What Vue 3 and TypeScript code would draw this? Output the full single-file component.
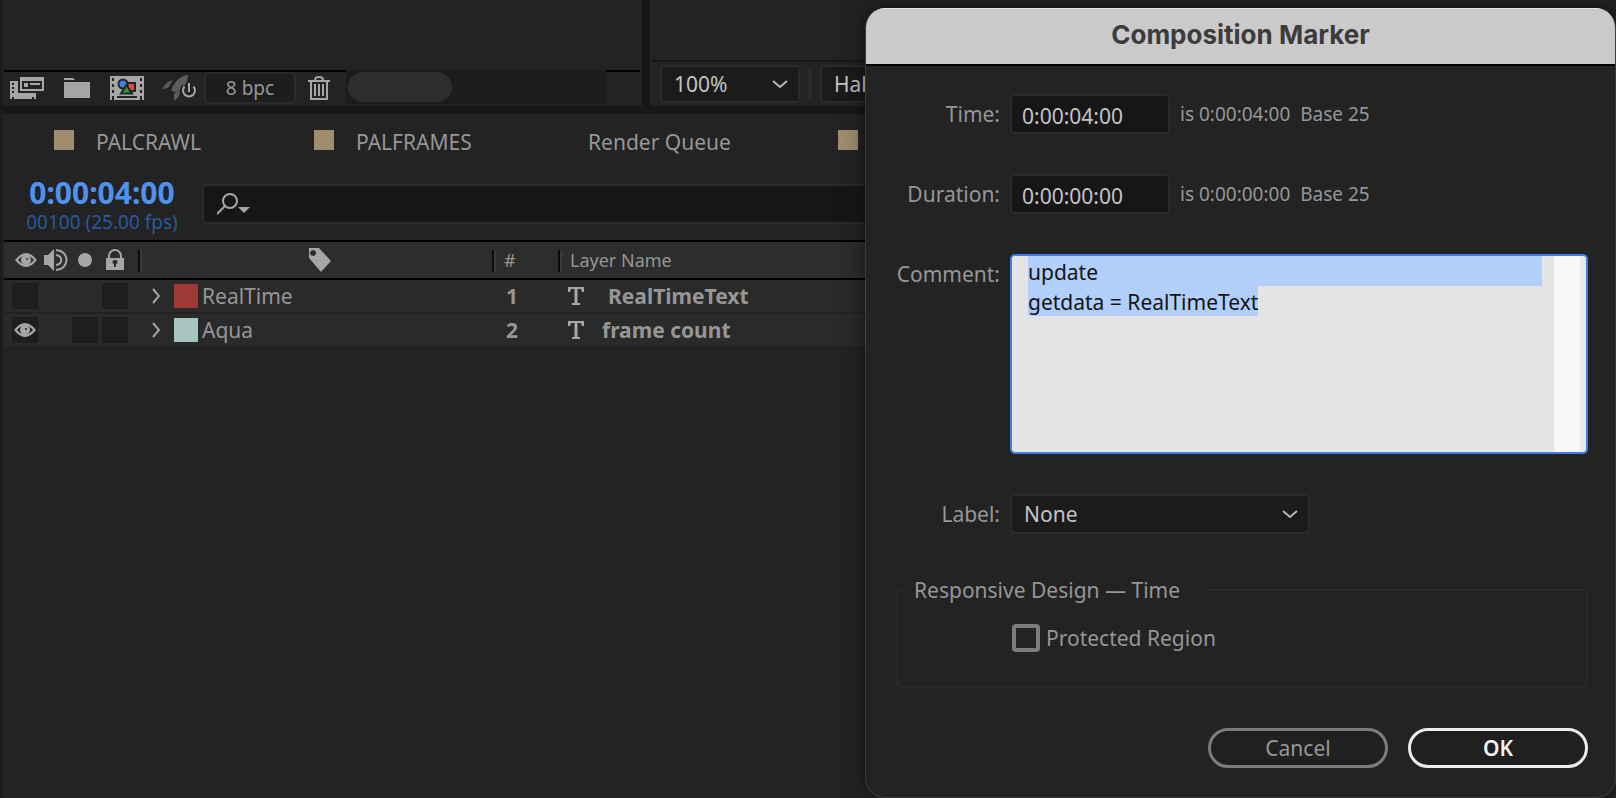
<script setup lang="ts">
import { ref } from 'vue'

interface Layer {
  id: number
  label: string
  color: string
  name: string
  visible: boolean
  solo: boolean
  renamed: boolean
}

const tabs = [
  { name: 'PALCRAWL', swatch: true },
  { name: 'PALFRAMES', swatch: true },
  { name: 'Render Queue', swatch: false },
  { name: '', swatch: true },
]

const layers = ref<Layer[]>([
  { id: 1, label: 'RealTime', color: '#9f3a36', name: 'RealTimeText', visible: false, solo: false, renamed: false },
  { id: 2, label: 'Aqua', color: '#a8c4c1', name: 'frame count', visible: true, solo: true, renamed: true },
])

const search = ref('')
const time = ref('0:00:04:00')
const duration = ref('0:00:00:00')
const comment = ref('update\ngetdata = RealTimeText')
const label = ref('None')
const zoom = ref('100%')
const resolution = ref('Half')
const isProtected = ref(false)
</script>

<template>
  <div class="app">
    <div class="top">
      <section class="project">
        <div class="project-body"></div>
        <div class="project-bar">
          <div class="tools">
            <button class="icon-btn" aria-label="Interpret footage">
              <svg width="36" height="22" viewBox="0 0 36 22">
                <path fill="#a6a6a6" d="M10 0h24v14H10z" />
                <path fill="#232323" d="M12 4h20v8H12z" />
                <path fill="#a6a6a6" d="M14 6h4v4h-4zM20 6h10v2H20z" />
                <path fill="#a6a6a6" d="M0 4h8v12h18v6h-2v-2h-2v2H4v-2H2v2H0z" />
                <path fill="#232323" d="M2 6h2v2H2zM2 10h2v2H2zM2 14h2v2H2z" />
              </svg>
            </button>
            <button class="icon-btn" aria-label="New folder">
              <svg width="28" height="20" viewBox="0 0 28 20">
                <path fill="#a6a6a6" d="M0 0h9l2 2H0zM0 4h26v16H0z" />
              </svg>
            </button>
            <button class="icon-btn" aria-label="New composition">
              <svg width="34" height="24" viewBox="0 0 34 24">
                <path fill="#a6a6a6" d="M0 0h34v24H0z" />
                <path fill="#232323" d="M2 2h2v3H2zM2 8h2v3H2zM2 14h2v3H2zM2 20h2v4H2zM30 2h2v3h-2zM30 8h2v3h-2zM30 14h2v3h-2zM30 20h2v4h-2zM7 20h20v2H7z" />
                <path fill="#e5493a" stroke="#232323" stroke-width="2" d="M17 7h8v8h-8z" />
                <circle cx="13" cy="8" r="4.500" fill="#3f7fe0" stroke="#232323" stroke-width="2" />
                <path fill="#2f9a2f" stroke="#232323" stroke-width="2" d="M16.500 9l5.500 8.500H11z" />
              </svg>
            </button>
            <button class="icon-btn" aria-label="Project renderer">
              <svg width="36" height="26" viewBox="0 0 36 26">
                <path fill="#5c5c5c" d="M26 0c-8 1-13 6-17 15l5 3c6-4 12-9 12-18zM11 5C6 6 3 9 0 14l6-1zM18 16l-6 3v7c4-3 6-6 6-10z" />
                <path fill="none" stroke="#232323" stroke-width="6" d="M22.500 11.500a6 6 0 1 0 9 0" />
                <path fill="none" stroke="#a6a6a6" stroke-width="2" d="M22.500 11.500a6 6 0 1 0 9 0M27 8v9" />
              </svg>
            </button>
            <button class="depth">8 bpc</button>
            <button class="icon-btn" aria-label="Delete">
              <svg width="22" height="24" viewBox="0 0 22 24" fill="none" stroke="#a6a6a6" stroke-width="2">
                <path d="M0 5h22M7 4q0-3 4-3t4 3M3 5v18h16V5M7 8v12M11 8v12M15 8v12" />
              </svg>
            </button>
          </div>
          <div class="scroll"><div class="thumb"></div></div>
          <div class="corner"></div>
        </div>
      </section>
      <section class="viewer">
        <div class="viewer-body"></div>
        <div class="viewer-bar">
          <span class="picker zoom">
            <select v-model="zoom" aria-label="Magnification"><option>100%</option></select>
            <svg width="16" height="9" viewBox="0 0 16 9"><path d="M1 1l7 6 7-6" /></svg>
          </span>
          <span class="divider"></span>
          <span class="picker resolution">
            <select v-model="resolution" aria-label="Resolution"><option>Half</option></select>
          </span>
        </div>
      </section>
    </div>

    <main class="timeline">
      <nav class="tabs">
        <button v-for="(tab, i) in tabs" :key="i" class="tab" :aria-label="tab.name || 'Composition'">
          <i v-if="tab.swatch" class="chip"></i>{{ tab.name }}
        </button>
      </nav>
      <div class="controls">
        <div class="clock">
          <strong>0:00:04:00</strong>
          <span>00100 (25.00 fps)</span>
        </div>
        <label class="search">
          <svg width="34" height="22" viewBox="0 0 34 22">
            <g fill="none" stroke="#a6a6a6" stroke-width="2">
              <circle cx="13" cy="8" r="7" />
              <path d="M8 13l-8 8" />
            </g>
            <path fill="#a6a6a6" d="M21 14h12l-6 6z" />
          </svg>
          <input v-model="search" type="text" aria-label="Search layers" />
        </label>
      </div>

      <table class="layers">
        <colgroup>
          <col class="c-av" />
          <col class="c-label" />
          <col class="c-num" />
          <col />
        </colgroup>
        <thead>
          <tr>
            <th aria-label="Switches">
              <div class="switches head">
                <svg width="22" height="14" viewBox="0 0 22 14">
                  <path fill="#a6a6a6" d="M0 7Q11-7 22 7 11 21 0 7z" />
                  <path fill="#2d2d2d" d="M3 7q8-9 16 0-8 9-16 0z" />
                  <circle cx="11" cy="7" r="5" fill="#a6a6a6" />
                  <circle cx="12" cy="6" r="1" fill="#2d2d2d" />
                </svg>
                <svg width="24" height="22" viewBox="0 0 24 22">
                  <path fill="#a6a6a6" d="M0 6h4l6-6v22l-6-6H0z" />
                  <path fill="none" stroke="#a6a6a6" stroke-width="2" d="M12 1c14 1 14 19 0 20M12 6c7 1 7 9 0 10" />
                </svg>
                <svg width="14" height="14" viewBox="0 0 14 14"><circle cx="7" cy="7" r="7" fill="#a6a6a6" /></svg>
                <svg width="18" height="22" viewBox="0 0 18 22">
                  <path fill="#a6a6a6" fill-rule="evenodd" d="M0 9h18v12H0zM9 11a2 2 0 0 0-1 4v3h2v-3a2 2 0 0 0-1-4z" />
                  <path fill="none" stroke="#a6a6a6" stroke-width="2" d="M3 9V7a6 6 0 0 1 12 0v2" />
                </svg>
              </div>
            </th>
            <th aria-label="Label" class="split">
              <svg class="tag" width="24" height="24" viewBox="0 0 24 24">
                <path fill="#a6a6a6" fill-rule="evenodd" d="M0 0h10l12 13-10 11L0 10zM4 2a3 3 0 1 0 .1 0z" />
              </svg>
            </th>
            <th class="split"><span>#</span></th>
            <th class="split"><span>Layer Name</span></th>
          </tr>
        </thead>
        <tbody>
          <tr v-for="layer in layers" :key="layer.id">
            <td>
              <div class="switches">
                <button class="cell" aria-label="Video">
                  <svg v-if="layer.visible" width="22" height="14" viewBox="0 0 22 14">
                    <path fill="#a6a6a6" d="M0 7Q11-7 22 7 11 21 0 7z" />
                    <path fill="#1e1e1e" d="M3 7q8-9 16 0-8 9-16 0z" />
                    <circle cx="11" cy="7" r="5" fill="#a6a6a6" />
                    <circle cx="12" cy="6" r="1" fill="#1e1e1e" />
                  </svg>
                </button>
                <button class="cell" :class="{ blank: !layer.solo }" aria-label="Solo"></button>
                <button class="cell" aria-label="Lock"></button>
              </div>
            </td>
            <td>
              <div class="label">
                <button class="twirl" aria-label="Expand">
                  <svg width="8" height="16" viewBox="0 0 8 16"><path d="M1 1l6 7-6 7" /></svg>
                </button>
                <i class="swatch" :style="{ background: layer.color }"></i>
                {{ layer.label }}
              </div>
            </td>
            <td class="num">{{ layer.id }}</td>
            <td>
              <div class="name" :class="{ renamed: layer.renamed }">
                <svg width="16" height="18" viewBox="0 0 16 18">
                  <path fill="#a6a6a6" d="M0 0h16v5h-2l-1-3H9.500v14H12v2H4v-2h2.500V2H3L2 5H0z" />
                </svg>
                {{ layer.name }}
              </div>
            </td>
          </tr>
        </tbody>
      </table>
    </main>

    <form class="dialog" role="dialog" aria-labelledby="dialog-title" @submit.prevent>
      <header id="dialog-title">Composition Marker</header>
      <div class="fields">
        <label for="f-time">Time:</label>
        <div class="field">
          <input id="f-time" v-model="time" type="text" />
          <span class="hint">is 0:00:04:00&nbsp; Base 25</span>
        </div>
        <label for="f-duration">Duration:</label>
        <div class="field">
          <input id="f-duration" v-model="duration" type="text" />
          <span class="hint">is 0:00:00:00&nbsp; Base 25</span>
        </div>
        <label for="f-comment">Comment:</label>
        <textarea id="f-comment" v-model="comment" spellcheck="false"></textarea>
        <label for="f-label">Label:</label>
        <span class="picker wide">
          <select id="f-label" v-model="label"><option>None</option></select>
          <svg width="16" height="9" viewBox="0 0 16 9"><path d="M1 1l7 6 7-6" /></svg>
        </span>
      </div>
      <fieldset>
        <legend>Responsive Design — Time</legend>
        <label class="check"><input v-model="isProtected" type="checkbox" />Protected Region</label>
      </fieldset>
      <footer>
        <button type="button" class="pill">Cancel</button>
        <button type="submit" class="pill primary">OK</button>
      </footer>
    </form>
  </div>
</template>

<style>
body {
  margin: 0;
  background: #232323;
}
</style>

<style scoped>
.app {
  position: relative;
  display: flex;
  flex-direction: column;
  min-height: 100vh;
  overflow: hidden;
  box-sizing: border-box;
  border-left: 2px solid #1a1a1a;
  background: #181818;
  color: #969696;
  font: 21px/30px "Noto Sans", "Open Sans", sans-serif;
}
.app * {
  box-sizing: border-box;
}
svg {
  display: block;
  flex: none;
}
button,
input,
select,
textarea {
  margin: 0;
  padding: 0;
  border: 0;
  background: none;
  color: inherit;
  font: inherit;
  outline: none;
  appearance: none;
}
.top {
  display: flex;
  gap: 8px;
  height: 106px;
}
.project {
  display: flex;
  flex-direction: column;
  width: 640px;
  background: #232323;
}
.project-body {
  flex: 1;
}
.project-bar {
  display: flex;
  height: 36px;
  padding: 0 2px;
}
.tools {
  display: flex;
  align-items: center;
  width: 342px;
  padding: 0 0 2px 6px;
  border-top: 2px solid #000;
}
.icon-btn {
  flex: none;
  margin-right: 18px;
}
.depth {
  flex: none;
  width: 92px;
  height: 32px;
  margin-right: 12px;
  margin-left: -12px;
  border: 2px solid #2b2b2b;
  border-radius: 5px;
  background: #1d1d1d;
  font-size: 19px;
  line-height: 28px;
}
.scroll {
  width: 260px;
  height: 34px;
  padding: 2px;
  background: #1c1c1c;
}
.thumb {
  width: 104px;
  height: 30px;
  border-radius: 15px;
  background: #2e2e2e;
}
.corner {
  flex: 1;
  border-top: 2px solid #000;
}
.viewer {
  display: flex;
  flex: 1;
  flex-direction: column;
  padding-left: 2px;
  background: #232323;
}
.viewer-body {
  flex: 1;
}
.viewer-bar {
  display: flex;
  align-items: center;
  height: 46px;
  padding: 0 8px;
  border-top: 2px solid #181818;
}
.picker {
  position: relative;
  display: flex;
  align-items: center;
  height: 38px;
  border: 2px solid #2b2b2b;
  border-radius: 5px;
  background: #1b1b1b;
  color: #c4c4c4;
}
.picker select {
  width: 100%;
  height: 100%;
  padding: 0 12px;
}
.picker svg {
  position: absolute;
  right: 10px;
  fill: none;
  stroke: #b8b8b8;
  stroke-width: 2;
  pointer-events: none;
}
.zoom {
  width: 140px;
}
.divider {
  width: 4px;
  height: 30px;
  margin: 0 8px;
  background: #2b2b2b;
}
.resolution {
  width: 140px;
}
.timeline {
  flex: 1;
  margin-top: 8px;
  background: #232323;
}
.tabs {
  display: grid;
  grid-template-columns: 260px 274px 250px 250px;
  padding: 10px 0 0 52px;
}
.tab {
  display: flex;
  align-items: center;
  gap: 22px;
  height: 36px;
}
.chip {
  width: 20px;
  height: 20px;
  margin-bottom: 4px;
  background: #9e8e6e;
}
.controls {
  display: flex;
  align-items: flex-end;
  gap: 22px;
  height: 80px;
  padding: 0 0 5px 22px;
}
.clock {
  display: flex;
  flex-direction: column;
  align-items: center;
  width: 156px;
  color: #28599e;
  font-size: 19px;
  line-height: 26px;
  white-space: nowrap;
}
.clock strong {
  color: #4f92ec;
  font-size: 30px;
  line-height: 32px;
}
.search {
  display: flex;
  flex: 1;
  align-items: center;
  height: 40px;
  margin-bottom: 11px;
  padding-left: 13px;
  border: 2px solid #2b2b2b;
  border-radius: 5px;
  background: #161616;
}
.search input {
  flex: 1;
}
.layers {
  width: 100%;
  padding-left: 2px;
  border-spacing: 0;
  table-layout: fixed;
}
.c-av {
  width: 134px;
}
.c-label {
  width: 354px;
}
.c-num {
  width: 66px;
}
th,
td {
  padding: 0;
  text-align: left;
}
th {
  height: 40px;
  border-top: 2px solid #000;
  border-bottom: 2px solid #000;
  background: #2d2d2d;
  font-size: 18px;
  font-weight: 400;
}
.split {
  background: linear-gradient(#0a0a0a, #0a0a0a) 0 8px / 2px 22px no-repeat,
    linear-gradient(#3a3a3a, #3a3a3a) 2px 8px / 2px 22px no-repeat, #2d2d2d;
}
.split span {
  padding-left: 12px;
}
.tag {
  margin-left: 171px;
}
td {
  height: 34px;
  border-bottom: 2px solid #232323;
  background: #2a2a2a;
}
.switches {
  display: grid;
  grid-template-columns: 56px 26px 26px;
  gap: 4px;
  align-items: center;
  padding-left: 8px;
}
.head {
  grid-template-columns: 23px 28px 22px 18px;
  gap: 6px;
  padding-left: 11px;
}
.cell {
  display: grid;
  place-items: center;
  width: 26px;
  height: 26px;
  background: #1e1e1e;
}
.blank {
  background: none;
}
.label {
  display: flex;
  align-items: center;
  padding-left: 14px;
}
.twirl {
  margin-right: 14px;
}
.twirl svg {
  fill: none;
  stroke: #a6a6a6;
  stroke-width: 2;
}
.swatch {
  width: 24px;
  height: 24px;
  margin-right: 4px;
}
.num {
  padding-left: 14px;
  font-weight: 700;
}
.name {
  display: flex;
  align-items: center;
  gap: 24px;
  padding-left: 10px;
  font-weight: 700;
}
.renamed {
  gap: 18px;
}
.dialog {
  position: absolute;
  top: 8px;
  right: 0;
  width: 751px;
  overflow: hidden;
  border: 1px solid #3a3a3a;
  border-top: 0;
  border-radius: 20px;
  background: #232323;
  box-shadow: 0 0 24px rgba(0, 0, 0, 0.5);
}
.dialog header {
  height: 58px;
  border-top: 1px solid #e2e2e2;
  border-bottom: 2px solid #000;
  background: #cacaca;
  color: #3c3c3c;
  font: 700 26px/52px Inter, sans-serif;
  text-align: center;
}
.fields {
  display: grid;
  grid-template-columns: 104px 1fr;
  gap: 40px 10px;
  padding: 28px 27px 0 30px;
}
.fields label {
  line-height: 40px;
  text-align: right;
}
.field {
  display: flex;
  align-items: center;
  gap: 10px;
}
.field input {
  width: 160px;
  height: 40px;
  padding: 3px 10px 0;
  border: 2px solid #2b2b2b;
  border-radius: 5px;
  background: #161616;
  color: #c4c4c4;
}
.hint {
  font-size: 19px;
}
textarea {
  display: block;
  width: 100%;
  height: 200px;
  padding: 1px 44px 0 16px;
  border: 2px solid #3f7fe0;
  border-radius: 5px;
  resize: none;
  background: linear-gradient(#b2cffb, #b2cffb) 16px 0 / calc(100% - 60px) 30px no-repeat,
    linear-gradient(#b2cffb, #b2cffb) 16px 30px / 230px 30px no-repeat,
    linear-gradient(90deg, #f9f9f9 26px, #e9e9e9 26px) 100% 0 / 32px 100% no-repeat, #e4e4e4;
  color: #141414;
}
.wide {
  width: 300px;
  height: 40px;
}
fieldset {
  height: 113px;
  margin: 41px 27px 0 30px;
  padding: 18px 0 0 114px;
  border: 2px solid #2a2a2a;
  border-radius: 5px;
}
legend {
  margin-left: -108px;
  padding: 0 28px 0 10px;
}
.check {
  display: flex;
  align-items: center;
  gap: 6px;
}
.check input {
  width: 28px;
  height: 28px;
  border: 4px solid #7c7c7c;
  border-radius: 4px;
}
footer {
  display: flex;
  justify-content: flex-end;
  gap: 20px;
  padding: 40px 27px 29px;
}
.pill {
  width: 180px;
  height: 40px;
  border: 3px solid #7c7c7c;
  border-radius: 20px;
  background: #202020;
  line-height: 34px;
}
.primary {
  border-color: #ececec;
  color: #f2f2f2;
  font-weight: 600;
}
</style>
